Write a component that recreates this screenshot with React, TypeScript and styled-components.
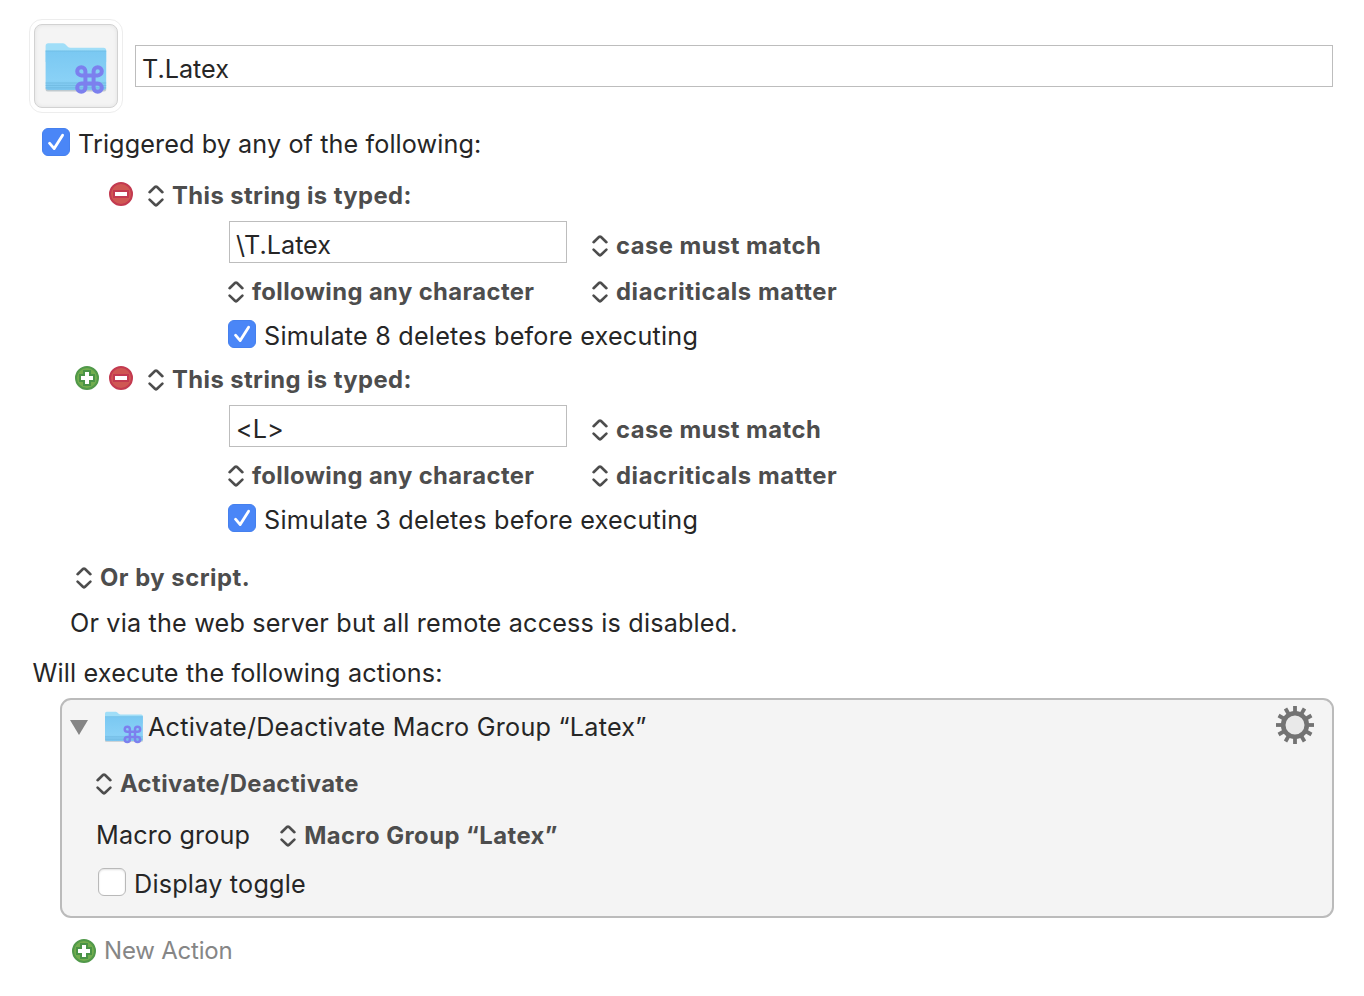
import React from "react";
import styled, { createGlobalStyle } from "styled-components";

const Global = createGlobalStyle`
  * { box-sizing: border-box; }
  body { margin: 0; background: #fff; }
`;

const Page = styled.main`
  width: 1364px;
  height: 996px;
  padding-top: 19px;
  overflow: hidden;
  background: #fff;
  color: #262626;
  font-family: Inter, "Liberation Sans", sans-serif;
  font-size: 25.2px;
  font-feature-settings: "calt" 0;
  line-height: 32px;
`;

const Header = styled.header`
  display: flex;
  padding-left: 29px;
`;

const IconFrame = styled.div`
  width: 94px;
  height: 94px;
  padding: 4px;
  border: 1px solid #ededed;
  border-radius: 13px;
`;

const IconWell = styled.div`
  width: 84px;
  height: 84px;
  padding: 17px 9px;
  border: 1px solid #d2d2d2;
  border-radius: 8px;
  background: #f4f4f4;
  box-shadow: inset 0 0 4px rgba(0, 0, 0, 0.08);
`;

const Field = styled.div<{ $width: number }>`
  width: ${(p) => p.$width}px;
  height: 42px;
  padding: 7px 0 0 6px;
  border: 1px solid #bdbdbd;
  background: #fff;
  line-height: 32px;
  white-space: nowrap;
`;

const NameField = styled(Field)`
  margin: 26px 0 0 12px;
`;

const Row = styled.div<{ $h: number; $left?: number; $top?: number }>`
  display: flex;
  align-items: center;
  height: ${(p) => p.$h}px;
  margin-top: ${(p) => p.$top ?? 0}px;
  padding-left: ${(p) => p.$left ?? 0}px;
`;

const Label = styled.span<{ $track?: number; $gap?: number; $drop?: number }>`
  margin-left: ${(p) => p.$gap ?? 0}px;
  padding-top: ${(p) => p.$drop ?? 0}px;
  letter-spacing: ${(p) => p.$track ?? 0}px;
  white-space: nowrap;
`;

const MenuLabel = styled.span<{ $track: number }>`
  margin-left: 8px;
  color: #4d4d4d;
  font-size: 23.8px;
  font-weight: 700;
  letter-spacing: ${(p) => p.$track}px;
  white-space: nowrap;
`;

const Menu = styled.div`
  display: flex;
  align-items: center;
`;

const Box = styled.span<{ $on: boolean }>`
  display: flex;
  flex: none;
  width: 28px;
  height: 28px;
  border-radius: 6px;
  border: 1px solid ${(p) => (p.$on ? "#4580ee" : "#b9b9b9")};
  background: ${(p) => (p.$on ? "#4a86f7" : "#fff")};
  box-shadow: ${(p) => (p.$on ? "none" : "inset 0 1px 2px rgba(0,0,0,0.12)")};
`;

const Trigger = styled.section`
  height: 184px;
`;

const TriggerHead = styled.div`
  display: grid;
  grid-template-columns: 34px 39px auto;
  align-items: center;
  height: 48px;
  padding-left: 75px;
`;

const Options = styled.div<{ $h: number; $left: number }>`
  display: grid;
  grid-template-columns: ${(p) => 592 - p.$left}px auto;
  align-items: center;
  height: ${(p) => p.$h}px;
  padding-left: ${(p) => p.$left}px;
`;

const Lift = styled.span<{ $by: number }>`
  display: flex;
  padding-bottom: ${(p) => p.$by}px;
`;

const Drop = styled.span<{ $by: number }>`
  display: flex;
  padding-top: ${(p) => p.$by}px;
`;

const Card = styled.section`
  width: 1274px;
  height: 220px;
  margin: 9px 0 0 60px;
  border: 2px solid #bbb;
  border-radius: 11px;
  background: #f4f4f4;
`;

const CardTitle = styled.div`
  display: flex;
  align-items: center;
  height: 54px;
  padding: 0 18px 0 8px;
`;

const Spacer = styled.span`
  flex: 1;
`;

const Muted = styled(Label)`
  color: #868686;
  font-size: 24px;
`;

const Svg = styled.svg`
  display: block;
  flex: none;
`;

function Chevrons() {
  return (
    <Svg width="16" height="22" viewBox="0 0 16 22" fill="none" stroke="#4d4d4d" strokeWidth="2.6" strokeLinecap="round" strokeLinejoin="round">
      <path d="M1.6 7.2L7.2 1.8Q8 1.2 8.8 1.8L14.4 7.2" />
      <path d="M1.6 14.6L7.2 20Q8 20.6 8.8 20L14.4 14.6" />
    </Svg>
  );
}

function Popup({ children, track = 0.42 }: { children: string; track?: number }) {
  return (
    <Menu>
      <Chevrons />
      <MenuLabel $track={track}>{children}</MenuLabel>
    </Menu>
  );
}

function Check({ on = true }: { on?: boolean }) {
  return (
    <Box $on={on}>
      {on && (
        <Svg width="26" height="26" viewBox="0 0 26 26" fill="none" stroke="#fff" strokeWidth="2.8" strokeLinecap="round" strokeLinejoin="round">
          <path d="M6.5 14.2L11.2 19.6L19.6 6.2" />
        </Svg>
      )}
    </Box>
  );
}

function Minus() {
  return (
    <Svg width="24" height="24" viewBox="0 0 24 24">
      <circle cx="12" cy="12" r="11" fill="#cf5753" stroke="#c33a50" strokeWidth="2" />
      <rect x="5" y="9" width="14" height="6" fill="#fff" stroke="#c33a50" strokeWidth="2" />
    </Svg>
  );
}

function Plus() {
  return (
    <Svg width="24" height="24" viewBox="0 0 24 24">
      <circle cx="12" cy="12" r="11" fill="#72ad4e" stroke="#51994a" strokeWidth="2" />
      <path d="M9 5h6v4h4v6h-4v4H9v-4H5V9h4z" fill="#fff" stroke="#4a9346" strokeWidth="2" />
    </Svg>
  );
}

function Folder({ width, height }: { width: number; height: number }) {
  return (
    <Svg width={width} height={height} viewBox="0 0 64 53" preserveAspectRatio="none">
      <defs>
        <linearGradient id="folderFront" x1="0" y1="0" x2="0" y2="1">
          <stop offset="0" stopColor="#7ac8f2" />
          <stop offset="0.75" stopColor="#89d1f6" />
          <stop offset="1" stopColor="#7cc6ee" />
        </linearGradient>
      </defs>
      <path d="M1.6 46h60.6v2q-.5 1.5-2.5 1.5H4.2Q2 49.5 1.6 48z" fill="#bfc9ce" />
      <path d="M1.6 4q0-2.700 2.700-2.700h14.400q1.600 0 2.600 1l2.200 2.200q1.200 1.200 3 1.200h33q2.700 0 2.700 2.700V20H1.600z" fill="#a0def8" />
      <path d="M1.6 8.700h60.600v36.600q0 2.700-2.700 2.700H4.300q-2.700 0-2.700-2.700z" fill="url(#folderFront)" />
      <path d="M1.6 9h60.600" stroke="#6fbde4" strokeWidth=".8" />
      <path d="M1.6 41h60.600M1.6 43.400h60.600M1.6 45.800h60.600" stroke="#6db7de" strokeWidth=".8" />
      <path
        d="M41.4 29.3a4.1 4.1 0 1 0-4.1 4.1h16.4a4.1 4.1 0 1 0-4.1-4.1v16.4a4.1 4.1 0 1 0 4.1-4.1h-16.4a4.1 4.1 0 1 0 4.1 4.1z"
        fill="none"
        stroke="#7c80ee"
        strokeWidth="4"
        strokeLinejoin="round"
      />
    </Svg>
  );
}

function Gear() {
  const teeth = Array.from({ length: 12 }, (_, i) => i * 30);
  return (
    <Svg width="38" height="38" viewBox="-19 -19 38 38">
      {teeth.map((a) => (
        <rect key={a} x="-1.9" y="-19" width="3.8" height="8" fill="#737373" transform={`rotate(${a})`} />
      ))}
      <circle r="11.8" fill="#e9e9e9" stroke="#737373" strokeWidth="4.6" />
    </Svg>
  );
}

function TypedTrigger({ text, deletes, canAdd }: { text: string; deletes: number; canAdd?: boolean }) {
  return (
    <Trigger>
      <TriggerHead>
        <Lift $by={4}>{canAdd && <Plus />}</Lift>
        <Lift $by={4}><Minus /></Lift>
        <Popup>This string is typed:</Popup>
      </TriggerHead>
      <Options $h={44} $left={229}>
        <Field $width={338}>{text}</Field>
        <Drop $by={8}><Popup track={0.47}>case must match</Popup></Drop>
      </Options>
      <Options $h={56} $left={228}>
        <Popup track={0.4}>following any character</Popup>
        <Popup track={0.6}>diacriticals matter</Popup>
      </Options>
      <Row $h={28} $left={228}>
        <Check />
        <Label $gap={8} $drop={4} $track={0.22}>{`Simulate ${deletes} deletes before executing`}</Label>
      </Row>
    </Trigger>
  );
}

export default function App() {
  return (
    <Page>
      <Global />
      <Header>
        <IconFrame>
          <IconWell><Folder width={64} height={53} /></IconWell>
        </IconFrame>
        <NameField $width={1198}>T.Latex</NameField>
      </Header>
      <Row $h={28} $left={42} $top={15}>
        <Check />
        <Label $gap={8} $drop={4} $track={0.1}>Triggered by any of the following:</Label>
      </Row>
      <Row $h={16} />
      <TypedTrigger text="\T.Latex" deletes={8} />
      <TypedTrigger text="<L>" deletes={3} canAdd />
      <Row $h={32} $left={76} $top={22}><Popup track={0.52}>Or by script.</Popup></Row>
      <Row $h={32} $left={70} $top={13}>
        <Label $track={0.18}>Or via the web server but all remote access is disabled.</Label>
      </Row>
      <Row $h={32} $left={32.5} $top={18}>
        <Label $track={0.17}>Will execute the following actions:</Label>
      </Row>
      <Card>
        <CardTitle>
          <Svg width="18" height="15" viewBox="0 0 18 15"><path d="M0 0h18L9 15z" fill="#858585" /></Svg>
          <Label $gap={16}><Folder width={40} height={33} /></Label>
          <Label $gap={4} $track={0.24}>Activate/Deactivate Macro Group “Latex”</Label>
          <Spacer />
          <Lift $by={4}><Gear /></Lift>
        </CardTitle>
        <Row $h={60} $left={34}><Popup track={0.4}>Activate/Deactivate</Popup></Row>
        <Row $h={44} $left={34}>
          <Lift $by={2}><Label $track={0.15}>Macro group</Label></Lift>
          <Label $gap={30}><Popup track={0.46}>Macro Group “Latex”</Popup></Label>
        </Row>
        <Row $h={48} $left={36}>
          <Check on={false} />
          <Label $gap={8} $drop={4} $track={0.22}>Display toggle</Label>
        </Row>
      </Card>
      <Row $h={50} $left={72} $top={8}>
        <Plus />
        <Muted $gap={8} $track={-0.2}>New Action</Muted>
      </Row>
    </Page>
  );
}
